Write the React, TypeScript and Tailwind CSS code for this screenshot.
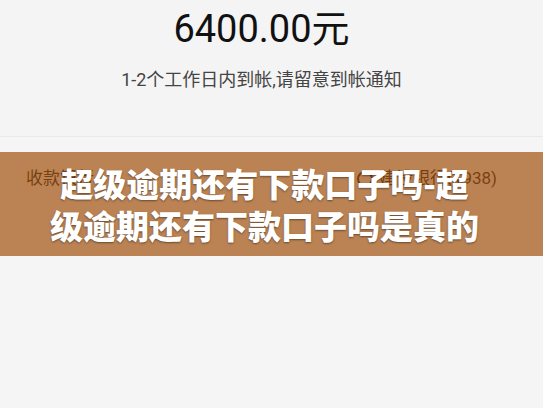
import React from 'react';

const cjk = { fontFamily: 'Roboto, "Noto Sans CJK SC", sans-serif' };

export default function App() {
  return (
    <div className="relative w-[543px] h-[408px] overflow-hidden bg-[#f5f5f5]" style={cjk}>
      {/* Amount summary */}
      <div className="h-[137px] bg-[#f4f4f4] border-b border-[#e9e9e9] pr-5 flex flex-col items-center">
        <div className="mt-[5px] text-[38px] leading-[48px] text-[#111]">6400.00元</div>
        <div className="mt-[15px] text-[18px] leading-[24px] text-[#444]">1-2个工作日内到帐,请留意到帐通知</div>
      </div>

      {/* Detail rows */}
      <div className="mt-[14px] bg-[#f6f6f6] pr-5">
        <div className="h-[56px] px-[26px] flex items-center justify-between text-[17px] text-[#111]">
          <span>收款银行</span>
          <span className="flex items-center gap-[6px]">
            <span className="w-[16px] h-[16px] rounded-full border-2 border-[#111]" />
            建设银行(1938)
          </span>
        </div>
      </div>

      {/* Title overlay */}
      <div className="absolute left-0 right-0 top-[152px] h-[104px] bg-[#a2520f]/70 flex justify-center items-center pr-[14px]">
        <div
          className="w-[434px] text-center text-white font-black text-[33px] leading-[42px] [text-shadow:0_1px_2px_rgba(0,0,0,0.45)]"
          style={{ fontFamily: '"Noto Sans CJK SC", sans-serif' }}
        >
          超级逾期还有下款口子吗-超级逾期还有下款口子吗是真的
        </div>
      </div>
    </div>
  );
}
